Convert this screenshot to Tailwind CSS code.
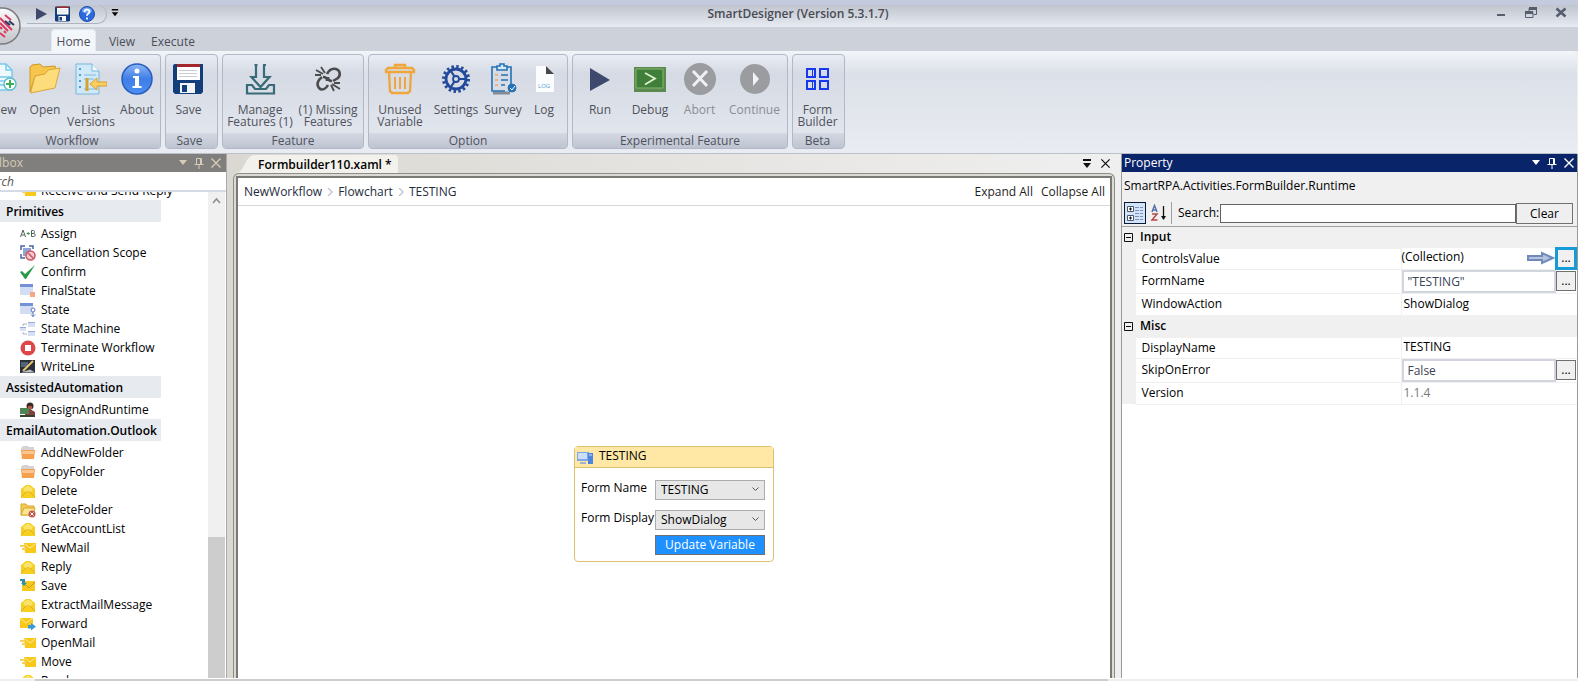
<!DOCTYPE html>
<html lang="en">
<head>
    <meta charset="UTF-8">
    <meta name="viewport" content="width=device-width, initial-scale=1.0">
    <title>SmartDesigner (Version 5.3.1.7)</title>
    <script src="https://cdn.jsdelivr.net/npm/@tailwindcss/browser@4"></script>
</head>
<body class="h-screen flex flex-col overflow-hidden bg-[#efefef] font-['Open_Sans','Noto_Sans',sans-serif] text-xs text-black">

    <!-- Shared icons -->
    <svg class="hidden" aria-hidden="true">
        <symbol id="floppy" viewBox="0 0 32 32">
            <path d="M0 3a2 2 0 0 1 2-2h28v28l-2 2H2l-2-2z" fill="#123f7c"/>
            <path d="M4 1h23v3H4z" fill="#a3262a"/>
            <path d="M4 4h23v13H4z" fill="#fff"/>
            <path d="M6 7.500h18M6 10.500h18M6 13.500h18" stroke="#c9ccd2"/>
            <path d="M7 20h15v10H7z" fill="#f2f4f7"/>
            <path d="M9 22h5v7H9z" fill="#123f7c"/>
        </symbol>
        <symbol id="folder" viewBox="0 0 16 16">
            <path d="M1 3l2-2h5l1 1h5v4H1z" fill="#d5d3d6"/>
            <path d="M1 5h14l-1 9H2z" fill="#f5a04e"/>
            <path d="M2 6h12l-.5 3h-11z" fill="#fcc792"/>
        </symbol>
        <symbol id="mail-open" viewBox="0 0 16 16">
            <path d="M1 6l5-4h4l5 4v9H1z" fill="#f7cf20"/>
            <path d="M3 6l4-3h2l4 3-3 4H6z" fill="#fae369"/>
            <path d="M1 14l5-5h4l5 5" fill="none" stroke="#e3ae12"/>
        </symbol>
        <symbol id="mail-fast" viewBox="0 0 16 16">
            <path d="M4 3h12v10H5z" fill="#f8c81b"/>
            <path d="M0 6h5M2 9h4" stroke="#f5cf62" stroke-width="2"/>
            <path d="M5 4l5 4 5-4" fill="none" stroke="#fdeb9d"/>
        </symbol>
        <symbol id="pin" viewBox="0 0 12 12">
            <path d="M3.500 7V1.500h5V7M1.500 7.500h9M6 8v4M7.500 1.500V7" fill="none" stroke="currentColor"/>
        </symbol>
        <symbol id="cross" viewBox="0 0 12 12">
            <path d="M1.500 1.500l9 9M10.500 1.500l-9 9" fill="none" stroke="currentColor" stroke-width="1.400"/>
        </symbol>
        <symbol id="caret" viewBox="0 0 10 6">
            <path d="M1 0h8L5 5z" fill="currentColor"/>
        </symbol>
        <symbol id="menu-caret" viewBox="0 0 10 10">
            <path d="M1 0h8v2H1zM1 4h8L5 9z" fill="currentColor"/>
        </symbol>
        <symbol id="minus-box" viewBox="0 0 9 9">
            <path d="M.5.5h8v8h-8zM2 4.500h5" fill="none" stroke="#111"/>
        </symbol>
    </svg>

    <!-- Title bar -->
    <header class="relative h-[27px] shrink-0 flex items-start pt-[2px] border-t-[5px] border-[#c4cbdf] bg-linear-to-b from-[#c0c4cd] to-[#e7ebf2]">
        <div class="-mt-[2px] ml-[27px] w-[80px] h-[19px] flex items-center gap-2 pl-[9px] rounded-r-full rounded-bl-md border-r border-b border-[#aeb3bf]">
            <button aria-label="Run"><svg class="w-[11px] h-3" viewBox="0 0 11 12"><path d="M0 0l11 6-11 6z" fill="#3d4a6e"/></svg></button>
            <button aria-label="Save"><svg class="size-4"><use href="#floppy"/></svg></button>
            <button aria-label="Help"><svg class="size-4" viewBox="0 0 16 16"><circle cx="8" cy="8" r="7.500" fill="#2d6bdc" stroke="#1d4fae"/><ellipse cx="8" cy="4.500" rx="5" ry="3" fill="#6ea4f5"/><path d="M5.500 6c0-3.500 5-3 5-.3C10.500 7.800 8 7.500 8 9.800M8 11.500v2" fill="none" stroke="#fff" stroke-width="1.800"/></svg></button>
        </div>
        <button class="ml-1 mt-[2px]" aria-label="Customize toolbar"><svg class="w-2 h-2" viewBox="0 0 10 10"><use href="#menu-caret"/></svg></button>
        <h1 class="absolute inset-x-0 -top-1 text-center leading-[26px] pl-[18px] font-semibold text-[#484b55] pointer-events-none">SmartDesigner (Version 5.3.1.7)</h1>
        <div class="ml-auto mr-[11px] flex items-center gap-[18px] text-[#565d6c]">
            <button aria-label="Minimize"><svg class="size-3" viewBox="0 0 12 12"><path d="M2 7h8v2H2z" fill="currentColor"/></svg></button>
            <button aria-label="Restore"><svg class="size-3" viewBox="0 0 12 12"><path d="M4 4V1.500h7.500v6H9" fill="none" stroke="currentColor"/><path d="M4 0h8v3H4zM0 4h8v3H0z" fill="currentColor"/><path d="M.5 5.500h7.500v5H.5z" fill="none" stroke="currentColor"/></svg></button>
            <button aria-label="Close"><svg class="size-3" viewBox="0 0 12 12"><path d="M1.500 1.500l9 8M10.500 1.500l-9 8" stroke="currentColor" stroke-width="2.600"/></svg></button>
        </div>
        <svg class="absolute left-0 -top-1 z-10 w-[22px] h-[44px]" viewBox="0 0 22 44">
            <defs><linearGradient id="orb" x2="0" y2="1"><stop stop-color="#fafafb"/><stop offset="1" stop-color="#c2c3c7"/></linearGradient></defs>
            <circle cx="2" cy="25" r="18" fill="url(#orb)" stroke="#777a82" stroke-width="1.500"/>
            <path d="M0 17l12 12M0 22l8 8M5 14l6 5M0 26l2 2M0 32l5 4M4 30l2 2" stroke="#dc3a60" stroke-width="2"/>
            <path d="M5 20l5 4M9 20l5 4" stroke="#2c3a62" stroke-width="2"/>
        </svg>
    </header>

    <!-- Ribbon tabs -->
    <nav class="h-6 shrink-0 flex items-end bg-[#cdd1da] pl-[51px] text-[#4b4e58]">
        <a href="#" class="w-[45px] h-[22px] leading-6 text-center rounded-t border border-b-0 border-[#e3e7ee] bg-[#f3f6fb]">Home</a>
        <a href="#" class="w-[52px] h-[22px] leading-[26px] text-center">View</a>
        <a href="#" class="w-[50px] h-[22px] leading-[26px] text-center">Execute</a>
    </nav>

    <!-- Ribbon -->
    <section class="h-[103px] shrink-0 flex gap-1 py-[3px] pb-1 mr-px border-b border-[#bcc0c8] rounded-tr-md bg-linear-to-b from-[#f2f5fa] via-[#dce0e8] via-22% to-[#e9ecf2] text-[#4f525c] leading-3 whitespace-nowrap">
        <div class="w-[161px] flex flex-col overflow-hidden rounded-r-sm border border-l-0 border-[#b2b8c6] bg-linear-to-b from-[#e9edf4] via-[#d5dae4] via-20% to-[#e5e8ef]">
            <div class="flex-1 flex justify-end">
                <button class="w-9 shrink-0 flex flex-col items-center pt-2 gap-[9px]">
                    <svg class="size-8" viewBox="0 0 32 32"><path d="M4 1h14l6 6v20H4z" fill="#eef9fe" stroke="#77c9ec" stroke-width="1.500"/><path d="M18 1v6h6M8 14h15M8 18h10M8 22h8" fill="none" stroke="#77c9ec" stroke-width="1.500"/><circle cx="22" cy="21" r="6" fill="#fff" stroke="#5cc0ca" stroke-width="1.500"/><path d="M22 17v8M18 21h8" stroke="#3fae58" stroke-width="2"/></svg>
                    <span>New</span>
                </button>
                <button class="w-[46px] shrink-0 flex flex-col items-center pt-2 gap-[9px]">
                    <svg class="size-8" viewBox="0 0 32 32"><path d="M1 29V4l2-2 8-1 3 3 12-1 1 3v4l-21 3z" fill="#f6c54b" stroke="#d09a25"/><path d="M1.500 30L6 13l10-2 3-4 12-2-5 20z" fill="#fddc7c" stroke="#dba73a"/></svg>
                    <span>Open</span>
                </button>
                <button class="w-[46px] shrink-0 flex flex-col items-center pt-2 gap-[9px]">
                    <svg class="size-8" viewBox="0 0 32 32"><path d="M1 1h16l7 7v23H1z" fill="#cfe9f8" stroke="#79b7da"/><path d="M17 1v7h7" fill="#f1fafe" stroke="#79b7da"/><path d="M4 6h2M4 12h2M4 18h2M4 24h2" stroke="#4e9ed0" stroke-width="2"/><path d="M9 12h12M9 16h10M9 26h12" stroke="#82b9da"/><path d="M12 15v13" stroke="#d7a22b" stroke-width="3"/><path d="M15 21l7-6v4h10v4H22v4z" fill="#f9ce5d" stroke="#d8a032"/></svg>
                    <span>List<br>Versions</span>
                </button>
                <button class="w-[46px] shrink-0 flex flex-col items-center pt-2 gap-[9px]">
                    <svg class="size-8" viewBox="0 0 32 32"><defs><linearGradient id="info" x2="0" y2="1"><stop stop-color="#8ab6f5"/><stop offset=".5" stop-color="#3f7ee6"/><stop offset="1" stop-color="#4b90f2"/></linearGradient></defs><circle cx="16" cy="16" r="15" fill="url(#info)" stroke="#2a5cbd" stroke-width="1.500"/><circle cx="16" cy="8" r="2.500" fill="#fff"/><path d="M12 13h6v10h2.500v2h-9v-2H14v-8h-2z" fill="#fff"/></svg>
                    <span>About</span>
                </button>
            </div>
            <div class="h-[15px] leading-[15px] text-center pr-4 bg-linear-to-b from-[#d5d9e4] to-[#bdc3d0]">Workflow</div>
        </div>

        <div class="w-[53px] flex flex-col rounded-sm border border-[#b2b8c6] bg-linear-to-b from-[#e9edf4] via-[#d5dae4] via-20% to-[#e5e8ef]">
            <div class="flex-1 flex">
                <button class="w-[45px] flex flex-col items-center pt-2 gap-[9px]">
                    <svg class="size-8"><use href="#floppy"/></svg>
                    <span>Save</span>
                </button>
            </div>
            <div class="h-[15px] leading-[15px] text-center pr-1 bg-linear-to-b from-[#d5d9e4] to-[#bdc3d0]">Save</div>
        </div>

        <div class="w-[142px] flex flex-col rounded-sm border border-[#b2b8c6] bg-linear-to-b from-[#e9edf4] via-[#d5dae4] via-20% to-[#e5e8ef]">
            <div class="flex-1 flex">
                <button class="w-[74px] shrink-0 flex flex-col items-center pt-2 gap-[9px]">
                    <svg class="size-8" viewBox="0 0 32 32" fill="none" stroke="#386b77" stroke-width="2.200"><path d="M10.500 2h3M19 2h3M12 2v12H7.500l9 10 9-10H20V2"/><path d="M3 22h5l3 4h11l3-4h5v8.500H3z"/></svg>
                    <span>Manage<br>Features (1)</span>
                </button>
                <button class="w-[62px] shrink-0 flex flex-col items-center pt-2 gap-[9px]">
                    <svg class="size-8" viewBox="0 0 32 32" fill="none" stroke="#4b4b4d"><path d="M15 11c2-4 5-6 9-5 4 1 5 6 2 9l-5 3M20 18c-3 0-4-2-4-4M10 14c-4 3-6 7-3 11 3 3 7 1 9-3M11 14c3 0 4 1 4 4" stroke-width="2.600"/><path d="M4 7l7 4M9 4l4 6M3 12l6 0M20 21l8 5M19 22l3 6M22 20h6" stroke-width="1.800"/></svg>
                    <span>(1) Missing<br>Features</span>
                </button>
            </div>
            <div class="h-[15px] leading-[15px] text-center bg-linear-to-b from-[#d5d9e4] to-[#bdc3d0]">Feature</div>
        </div>

        <div class="w-[200px] flex flex-col rounded-sm border border-[#b2b8c6] bg-linear-to-b from-[#e9edf4] via-[#d5dae4] via-20% to-[#e5e8ef]">
            <div class="flex-1 flex">
                <button class="w-[62px] shrink-0 flex flex-col items-center pt-2 gap-[9px]">
                    <svg class="size-8" viewBox="0 0 32 32" fill="none" stroke="#efa63c" stroke-width="2.400"><path d="M2 9V7l2-2h24l2 2v2zM11 5V2h10v3M5 9l1 19 2 2h16l2-2 1-19"/><path d="M11 14v12M16 14v12M21 14v12" stroke-width="2"/></svg>
                    <span>Unused<br>Variable</span>
                </button>
                <button class="w-[50px] shrink-0 flex flex-col items-center pt-2 gap-[9px]">
                    <svg class="size-8" viewBox="0 0 32 32" fill="none" stroke="#23499a"><circle cx="16" cy="16" r="12.500" stroke-width="3" stroke-dasharray="2.450 2.450"/><circle cx="16" cy="16" r="10" stroke-width="2.800"/><circle cx="16" cy="16" r="3" stroke-width="1.800"/><path d="M19 16h6M14.500 13.500l-4-6M14.500 18.500l-4 6" stroke-width="2.200"/></svg>
                    <span>Settings</span>
                </button>
                <button class="w-[44px] shrink-0 flex flex-col items-center pt-2 gap-[9px]">
                    <svg class="size-8" viewBox="0 0 32 32" fill="none" stroke="#2472b4"><path d="M6 30h17" stroke="#858b94" stroke-width="3"/><path d="M10 4H5v24h13M20 4h4v17" stroke-width="1.600"/><path d="M10 3h3V1h4v2h3v4H10z" stroke-width="1.600" fill="#d5e8f6"/><path d="M14 12h7M14 17h7M14 22h4" stroke-width="1.600"/><path d="M8 12h3M8 17h3M8 22h3" stroke="#e9b186" stroke-width="2"/><circle cx="25" cy="25" r="4" fill="#2472b4"/><path d="M23 25l2 2 3-4" stroke="#fff"/></svg>
                    <span>Survey</span>
                </button>
                <button class="w-[38px] shrink-0 flex flex-col items-center pt-2 gap-[9px]">
                    <svg class="size-8" viewBox="0 0 32 32"><path d="M8 3h10l8 8v18H8z" fill="#fbfcfd"/><path d="M18 3l8 8h-8z" fill="#47484c"/><text x="10" y="25" font-size="6" fill="#5aa2d2">LOG</text></svg>
                    <span>Log</span>
                </button>
            </div>
            <div class="h-[15px] leading-[15px] text-center bg-linear-to-b from-[#d5d9e4] to-[#bdc3d0]">Option</div>
        </div>

        <div class="w-[216px] flex flex-col rounded-sm border border-[#b2b8c6] bg-linear-to-b from-[#e9edf4] via-[#d5dae4] via-20% to-[#e5e8ef]">
            <div class="flex-1 flex">
                <button class="w-[54px] shrink-0 flex flex-col items-center pt-2 gap-[9px]">
                    <svg class="size-8" viewBox="0 0 32 32"><path d="M6 5l20 12L6 28z" fill="#3d4a6e"/></svg>
                    <span>Run</span>
                </button>
                <button class="w-[46px] shrink-0 flex flex-col items-center pt-2 gap-[9px]">
                    <svg class="size-8" viewBox="0 0 32 32"><path d="M0 4h32v25H0z" fill="#5a8a4e"/><path d="M2 6h27v19H2z" fill="#3f7f39" stroke="#86b56e"/><path d="M11 10l10 5.500-10 6" fill="none" stroke="#e0f0cf" stroke-width="1.800"/></svg>
                    <span>Debug</span>
                </button>
                <button class="w-[53px] shrink-0 flex flex-col items-center pt-2 gap-[9px] text-[#8b8e96]">
                    <svg class="size-8" viewBox="0 0 32 32"><circle cx="16" cy="16" r="16" fill="#9a9c9f"/><path d="M9 8l14 15M23 8L9 23" stroke="#eef0f3" stroke-width="3"/></svg>
                    <span>Abort</span>
                </button>
                <button class="w-[57px] shrink-0 flex flex-col items-center pt-2 gap-[9px] text-[#8b8e96]">
                    <svg class="size-8" viewBox="0 0 32 32"><circle cx="16" cy="16" r="15" fill="#9a9c9f"/><path d="M14 9l6 7-6 7z" fill="#f2f3f5"/></svg>
                    <span>Continue</span>
                </button>
            </div>
            <div class="h-[15px] leading-[15px] text-center bg-linear-to-b from-[#d5d9e4] to-[#bdc3d0]">Experimental Feature</div>
        </div>

        <div class="w-[53px] flex flex-col rounded-sm border border-[#b2b8c6] bg-linear-to-b from-[#e9edf4] via-[#d5dae4] via-20% to-[#e5e8ef]">
            <div class="flex-1 flex">
                <button class="w-[49px] flex flex-col items-center pt-2 gap-[9px]">
                    <svg class="size-8" viewBox="0 0 32 32" fill="none" stroke="#1838f0" stroke-width="2"><path d="M5 6h8v8H5zM18 6h8v8h-8zM5 18h8v8H5zM18 18h8v8h-8z"/><path d="M10.500 6v8M10.500 18v8" stroke-width="1"/></svg>
                    <span>Form<br>Builder</span>
                </button>
            </div>
            <div class="h-[15px] leading-[15px] text-center pr-[2px] bg-linear-to-b from-[#d5d9e4] to-[#bdc3d0]">Beta</div>
        </div>
    </section>

    <main class="flex-1 min-h-0 flex bg-linear-to-r from-[#d5d2ca] to-[#efefef] to-70%">

        <!-- Toolbox -->
        <aside class="w-[227px] shrink-0 flex flex-col bg-white border-r border-[#a9a9a9]">
            <div class="h-[18px] shrink-0 flex items-center overflow-hidden bg-[#807f7e] text-[#d5cdb5]">
                <h2 class="-ml-[22px] mr-auto leading-5">Toolbox</h2>
                <div class="flex items-center gap-[5px] pr-1">
                    <button aria-label="Toolbox menu"><svg class="w-[10px] h-[6px]"><use href="#caret"/></svg></button>
                    <button aria-label="Pin toolbox"><svg class="size-3"><use href="#pin"/></svg></button>
                    <button aria-label="Close toolbox"><svg class="size-3"><use href="#cross"/></svg></button>
                </div>
            </div>
            <input type="text" aria-label="Search toolbox" placeholder="Search" class="h-5 shrink-0 w-full -indent-[22px] italic border-b-2 border-[#d3dbe6] placeholder:text-[#555]">
            <div class="flex-1 min-h-0 flex">
                <div class="flex-1 overflow-hidden leading-[19px] whitespace-nowrap">
                    <ul class="-mt-[11px]">
                        <li class="flex items-center gap-[5px] pl-5"><svg class="size-4"><use href="#mail-fast"/></svg>Receive and Send Reply</li>
                    </ul>
                    <h3 class="w-[161px] h-[22px] leading-6 pl-[6px] mb-[2px] font-semibold bg-[#e7ebf0]">Primitives</h3>
                    <ul>
                        <li class="flex items-center gap-[5px] pl-5">
                            <svg class="size-4" viewBox="0 0 16 16" fill="none" stroke="#55605a"><path d="M.5 11L3 4l2.500 7M1.500 9h3M11.500 4.500v6h2.200c2 0 2-3 0-3h-2.200M13 7.500c2-.2 2-3 0-3h-1.500"/><path d="M6.500 7.500h3.500M8.200 6v3" stroke="#3f9a50"/></svg>Assign
                        </li>
                        <li class="flex items-center gap-[5px] pl-5">
                            <svg class="size-4" viewBox="0 0 16 16"><path d="M1 5V1h4M9 1h4v3M1 9v4h4" fill="none" stroke="#4c62a0" stroke-width="1.500"/><path d="M3 3h8v8H3z" fill="#8fa5d6"/><circle cx="10.500" cy="10.500" r="4.500" fill="#f2c9d1" stroke="#cc5565" stroke-width="1.500"/><path d="M7.500 7.500l6 6" stroke="#cc5565" stroke-width="1.500"/></svg>Cancellation Scope
                        </li>
                        <li class="flex items-center gap-[5px] pl-5">
                            <svg class="size-4" viewBox="0 0 16 16"><path d="M0 8l2-1 3 3 10-9L6 15H5z" fill="#2b9a48"/></svg>Confirm
                        </li>
                        <li class="flex items-center gap-[5px] pl-5">
                            <svg class="size-4" viewBox="0 0 16 16"><path d="M0 1h13v11H0z" fill="#d3def4"/><path d="M0 1h13v3H0z" fill="#7391d3"/><path d="M10 9h5v5h-5z" fill="#f5a77d"/></svg>FinalState
                        </li>
                        <li class="flex items-center gap-[5px] pl-5">
                            <svg class="size-4" viewBox="0 0 16 16"><path d="M0 1h13v11H0z" fill="#d3def4"/><path d="M0 1h13v3H0z" fill="#7391d3"/><circle cx="13" cy="8" r="2" fill="#fff" stroke="#5c76b8"/><path d="M13 10v5M11 12.500l2 2 2-2" fill="none" stroke="#5c76b8"/></svg>State
                        </li>
                        <li class="flex items-center gap-[5px] pl-5">
                            <svg class="size-4" viewBox="0 0 16 16"><path d="M8 1h7v5H8zM8 10h7v5H8zM0 6h6v4H0z" fill="#d7e0f3"/><path d="M8 1h7v1H8zM8 10h7v1H8zM0 6h6v1H0z" fill="#94aad8"/><path d="M3 5V3h4M3 11v2h4" fill="none" stroke="#a5b3d0"/></svg>State Machine
                        </li>
                        <li class="flex items-center gap-[5px] pl-5">
                            <svg class="size-4" viewBox="0 0 16 16"><circle cx="8" cy="8" r="7.500" fill="#dd4747"/><path d="M5 5h6v6H5z" fill="#fff"/></svg>Terminate Workflow
                        </li>
                        <li class="flex items-center gap-[5px] pl-5">
                            <svg class="size-4" viewBox="0 0 16 16"><path d="M0 1h15v13H0z" fill="#2a3038"/><path d="M1 3h7v5H1z" fill="#51627a"/><path d="M3 12L13 2" stroke="#e7c36b" stroke-width="2"/><path d="M1 13.500l9-3 5 3z" fill="#b8bec6"/></svg>WriteLine
                        </li>
                    </ul>
                    <h3 class="w-[161px] h-[22px] leading-6 pl-[6px] mb-[2px] font-semibold bg-[#e7ebf0]">AssistedAutomation</h3>
                    <ul>
                        <li class="flex items-center gap-[5px] pl-5">
                            <svg class="size-4" viewBox="0 0 16 16"><circle cx="10" cy="4" r="3.500" fill="#3a2b28"/><path d="M8 4h4v3H8z" fill="#b5573e"/><path d="M5 15V9l5-2 5 3v5z" fill="#84403a"/><path d="M0 6h9v6H0z" fill="#4d8355"/><path d="M0 13h15v2H0z" fill="#32452e"/></svg>DesignAndRuntime
                        </li>
                    </ul>
                    <h3 class="w-[161px] h-[22px] leading-6 pl-[6px] mb-[2px] font-semibold bg-[#e7ebf0]">EmailAutomation.Outlook</h3>
                    <ul>
                        <li class="flex items-center gap-[5px] pl-5"><svg class="size-4"><use href="#folder"/></svg>AddNewFolder</li>
                        <li class="flex items-center gap-[5px] pl-5"><svg class="size-4"><use href="#folder"/></svg>CopyFolder</li>
                        <li class="flex items-center gap-[5px] pl-5"><svg class="size-4"><use href="#mail-open"/></svg>Delete</li>
                        <li class="flex items-center gap-[5px] pl-5">
                            <svg class="size-4" viewBox="0 0 16 16"><path d="M1 13V2h5l1 2h7v9z" fill="#f3cb50" stroke="#d9a92c"/><path d="M1 13l3-7h11l-2 7z" fill="#fbe594" stroke="#d9a92c"/><circle cx="12" cy="12" r="3.500" fill="#c2574a"/><path d="M10.500 10.500l3 3M13.500 10.500l-3 3" stroke="#fff"/></svg>DeleteFolder
                        </li>
                        <li class="flex items-center gap-[5px] pl-5"><svg class="size-4"><use href="#mail-open"/></svg>GetAccountList</li>
                        <li class="flex items-center gap-[5px] pl-5"><svg class="size-4"><use href="#mail-fast"/></svg>NewMail</li>
                        <li class="flex items-center gap-[5px] pl-5"><svg class="size-4"><use href="#mail-open"/></svg>Reply</li>
                        <li class="flex items-center gap-[5px] pl-5">
                            <svg class="size-4" viewBox="0 0 16 16"><path d="M2 3h13v10H2z" fill="#f8c81b"/><path d="M6 7l3 3 6-6" fill="none" stroke="#c99a18"/><path d="M0 1h5v4h2L4 8 1 5h1V3H0z" fill="#2f8fae"/></svg>Save
                        </li>
                        <li class="flex items-center gap-[5px] pl-5"><svg class="size-4"><use href="#mail-open"/></svg>ExtractMailMessage</li>
                        <li class="flex items-center gap-[5px] pl-5">
                            <svg class="size-4" viewBox="0 0 16 16"><path d="M0 2h13v10H0z" fill="#f8c81b"/><path d="M0 2l6 5 7-5" fill="none" stroke="#fdeb9d"/><path d="M8 9h3V7l5 3.500-5 4v-2H8z" fill="#3b9ad6"/></svg>Forward
                        </li>
                        <li class="flex items-center gap-[5px] pl-5"><svg class="size-4"><use href="#mail-fast"/></svg>OpenMail</li>
                        <li class="flex items-center gap-[5px] pl-5"><svg class="size-4"><use href="#mail-fast"/></svg>Move</li>
                        <li class="flex items-center gap-[5px] pl-5"><svg class="size-4"><use href="#mail-open"/></svg>Read</li>
                    </ul>
                </div>
                <div class="w-[18px] shrink-0 flex flex-col bg-[#f0f0f0] border-r border-white">
                    <svg class="w-[17px] h-[17px]" viewBox="0 0 17 17"><path d="M5 11l3.500-4 3.500 4" fill="none" stroke="#8c8c8c" stroke-width="1.500"/></svg>
                    <div class="mt-auto h-[29%] bg-[#cdcdcd]"></div>
                </div>
            </div>
        </aside>

        <!-- Designer -->
        <section class="flex-1 min-w-0 flex flex-col pl-[6px] pr-[6px]">
            <div class="h-[19px] shrink-0 flex items-end">
                <div class="flex h-[18px]">
                    <svg class="w-[18px] h-[18px] ml-1" viewBox="0 0 18 18"><path d="M0 18C8 16 8 0 18 0v18z" fill="#f3f1ec"/></svg>
                    <h2 class="pr-[6px] font-semibold leading-[20px] bg-[#f3f1ec] rounded-tr-sm -ml-px pl-1">Formbuilder110.xaml *</h2>
                </div>
                <div class="ml-auto self-center flex items-center gap-2 pr-1 text-[#111]">
                    <button aria-label="Open documents"><svg class="size-[10px]"><use href="#menu-caret"/></svg></button>
                    <button aria-label="Close document"><svg class="size-[11px]"><use href="#cross"/></svg></button>
                </div>
            </div>
            <div class="flex-1 min-h-0 flex flex-col border border-b-0 border-[#8f8d88] rounded-t-md px-[2px] pt-[2px] bg-[#dcdad4]">
                <div class="flex-1 flex flex-col border-2 border-b-0 border-[#7b7974] bg-white">
                    <div class="h-7 shrink-0 flex items-center border-b border-[#d3d6da] pl-[6px] pr-[5px] text-[#1f2b3c]">
                        <a href="#">NewWorkflow</a>
                        <svg class="w-4 h-2" viewBox="0 0 16 8"><path d="M6 0l4 4-4 4" fill="none" stroke="#c3c9d3" stroke-width="1.500"/></svg>
                        <a href="#">Flowchart</a>
                        <svg class="w-4 h-2" viewBox="0 0 16 8"><path d="M6 0l4 4-4 4" fill="none" stroke="#c3c9d3" stroke-width="1.500"/></svg>
                        <a href="#">TESTING</a>
                        <div class="ml-auto flex gap-2 text-[#1e1e1e]">
                            <button>Expand All</button>
                            <button>Collapse All</button>
                        </div>
                    </div>
                    <div class="relative flex-1">
                        <!-- Activity node -->
                        <div class="absolute left-[336px] top-[240px] w-[200px] h-[116px] rounded-sm border border-[#dcc06e] bg-white">
                            <div class="h-[21px] flex items-center gap-[6px] pl-[2px] border-b border-[#dcc06e] bg-[#ffe8a6]">
                                <svg class="size-4 mt-[2px]" viewBox="0 0 16 16"><path d="M0 2h12v9H0z" fill="#7ea6e8"/><path d="M1 3h9v6H1z" fill="#c9dffa"/><path d="M3 12h6v2H3z" fill="#9fb2d4"/><path d="M11 3h5v11h-5z" fill="#4f86dd"/><path d="M12 5h3" stroke="#cfe0fa"/></svg>
                                <span class="leading-4 pb-[2px]">TESTING</span>
                            </div>
                            <div class="grid grid-cols-[74px_110px] pl-[6px] pt-3">
                                <label for="formName" class="h-[30px] leading-4">Form Name</label>
                                <div class="relative h-[30px]">
                                    <select id="formName" class="appearance-none w-full h-5 pl-[5px] bg-[#e7e7e7] border border-[#acacac]"><option>TESTING</option></select>
                                    <svg class="absolute right-[6px] top-[7px] w-[7px] h-[5px] pointer-events-none" viewBox="0 0 7 5"><path d="M.5.5l3 3 3-3" fill="none" stroke="#555"/></svg>
                                </div>
                                <label for="formDisplay" class="leading-4 whitespace-nowrap">Form Display</label>
                                <div class="relative h-[25px]">
                                    <select id="formDisplay" class="appearance-none w-full h-5 pl-[5px] bg-[#e7e7e7] border border-[#acacac]"><option>ShowDialog</option></select>
                                    <svg class="absolute right-[6px] top-[7px] w-[7px] h-[5px] pointer-events-none" viewBox="0 0 7 5"><path d="M.5.5l3 3 3-3" fill="none" stroke="#555"/></svg>
                                </div>
                                <button class="col-start-2 h-5 leading-[18px] text-white bg-[#1e90ff] border border-[#707070]">Update Variable</button>
                            </div>
                        </div>
                    </div>
                </div>
            </div>
        </section>

        <!-- Property grid -->
        <aside class="w-[457px] shrink-0 flex flex-col bg-white border-x border-[#9a9a9a]">
            <div class="h-[18px] shrink-0 flex items-center justify-between pl-[2px] pr-[2px] bg-[#0a246a] text-white">
                <h2 class="leading-5">Property</h2>
                <div class="flex items-center gap-[5px]">
                    <button aria-label="Property menu"><svg class="w-[10px] h-[6px]"><use href="#caret"/></svg></button>
                    <button aria-label="Pin property"><svg class="size-3"><use href="#pin"/></svg></button>
                    <button aria-label="Close property"><svg class="size-3"><use href="#cross"/></svg></button>
                </div>
            </div>
            <div class="bg-[#f0f0f0] border-b border-[#a0a0a0]">
                <p class="pl-[2px] leading-7">SmartRPA.Activities.FormBuilder.Runtime</p>
                <div class="flex items-center pl-[2px] pr-1 pb-[2px] pt-[2px]">
                    <button aria-label="Categorized" class="size-[22px] grid place-items-center bg-[#d3e3f8] border border-[#0b1a38]">
                        <svg class="size-[18px]" viewBox="0 0 18 18"><path d="M1.500 2.500h6v5h-6zM1.500 11.500h6v5h-6z" fill="#fff" stroke="#4a5670"/><path d="M3 5h3M4.500 3.500v3M3 14h3M4.500 12.500v3" stroke="#111"/><path d="M9 3.500h4M9 6.500h4M14 3.500h3M14 6.500h3M9 9.500h4M14 9.500h3M9 12.500h4M14 12.500h3M9 15.500h4M14 15.500h3" stroke="#7b92bd"/></svg>
                    </button>
                    <button aria-label="Alphabetical" class="w-[25px] h-[22px] grid place-items-center">
                        <svg class="size-[18px]" viewBox="0 0 18 18" fill="none"><path d="M2 8l2.500-6.500L7 8M3 6h3" stroke="#5672ac" stroke-width="1.500"/><path d="M2 10h5l-5 6h5.500" stroke="#b4474a" stroke-width="1.500"/><path d="M13.500 2v13" stroke="#111" stroke-width="1.300"/><path d="M11 12h5l-2.500 4z" fill="#111"/></svg>
                    </button>
                    <label for="propertySearch" class="border-l border-[#a0a0a0] pl-[6px] leading-[22px] w-[49px] whitespace-nowrap">Search:</label>
                    <input id="propertySearch" type="text" class="flex-1 min-w-0 h-[19px] bg-white border border-[#626262]">
                    <button class="w-[57px] h-[21px] leading-[19px] bg-[#efefef] border border-[#707070]">Clear</button>
                </div>
            </div>
            <table class="w-full table-fixed border-collapse bg-white">
                <colgroup><col class="w-[13px]"><col><col class="w-[176px]"></colgroup>
                <tbody>
                    <tr class="h-[21px] bg-[#f0f0f0]">
                        <td><button class="block ml-[2px]" aria-label="Collapse Input"><svg class="size-[9px]"><use href="#minus-box"/></svg></button></td>
                        <th colspan="2" class="pl-[5px] text-left font-semibold">Input</th>
                    </tr>
                    <tr class="h-[21px]">
                        <td class="bg-[#f0f0f0]"></td>
                        <td class="pl-[6px] border border-[#f0f0f0]">ControlsValue</td>
                        <td class="border-b border-[#f0f0f0]">
                            <div class="h-5 flex items-center"><span class="pb-[3px]">(Collection)</span>
                                <svg class="ml-auto w-[28px] h-[14px]" viewBox="0 0 28 14"><path d="M1 5h14V2l11 5-11 5V9H1z" fill="#b4c4df" stroke="#6f8abb" stroke-width="2"/></svg>
                                <button class="relative z-10 w-[22px] h-[23px] -my-1 leading-4 bg-[#f0f0f0] border-[3px] border-[#179bd7]" aria-label="Edit ControlsValue">...</button>
                            </div>
                        </td>
                    </tr>
                    <tr class="h-[24px]">
                        <td class="bg-[#f0f0f0]"></td>
                        <td class="pl-[6px] border border-[#f0f0f0]"><label for="formNameValue">FormName</label></td>
                        <td class="border-b border-[#f0f0f0]">
                            <div class="flex items-center pr-px">
                                <input id="formNameValue" type="text" value="&quot;TESTING&quot;" class="flex-1 min-w-0 h-[23px] pl-1 text-[#3a4354] border-2 border-[#d0d5de]">
                                <button class="w-5 h-5 leading-4 bg-[#f0f0f0] border border-[#707070]" aria-label="Edit FormName">...</button>
                            </div>
                        </td>
                    </tr>
                    <tr class="h-[22px]">
                        <td class="bg-[#f0f0f0]"></td>
                        <td class="pl-[6px] border border-[#f0f0f0]">WindowAction</td>
                        <td class="pl-[2px] border-b border-[#f0f0f0]">ShowDialog</td>
                    </tr>
                    <tr class="h-[22px] bg-[#f0f0f0]">
                        <td><button class="block ml-[2px]" aria-label="Collapse Misc"><svg class="size-[9px]"><use href="#minus-box"/></svg></button></td>
                        <th colspan="2" class="pl-[5px] text-left font-semibold">Misc</th>
                    </tr>
                    <tr class="h-[21px]">
                        <td class="bg-[#f0f0f0]"></td>
                        <td class="pl-[6px] border border-[#f0f0f0]">DisplayName</td>
                        <td class="pl-[2px] border-b border-[#f0f0f0]">TESTING</td>
                    </tr>
                    <tr class="h-[24px]">
                        <td class="bg-[#f0f0f0]"></td>
                        <td class="pl-[6px] border border-[#f0f0f0]"><label for="skipOnError">SkipOnError</label></td>
                        <td class="border-b border-[#f0f0f0]">
                            <div class="flex items-center pr-px">
                                <input id="skipOnError" type="text" value="False" class="flex-1 min-w-0 h-[23px] pl-1 text-[#3a4354] border-2 border-[#d0d5de]">
                                <button class="w-5 h-5 leading-4 bg-[#f0f0f0] border border-[#707070]" aria-label="Edit SkipOnError">...</button>
                            </div>
                        </td>
                    </tr>
                    <tr class="h-[22px]">
                        <td class="bg-[#f0f0f0]"></td>
                        <td class="pl-[6px] border border-[#f0f0f0]">Version</td>
                        <td class="pl-[2px] border-b border-[#f0f0f0] text-[#7a7a7a]">1.1.4</td>
                    </tr>
                </tbody>
            </table>
        </aside>
    </main>

    <!-- Horizontal scrollbar -->
    <div class="h-[3px] shrink-0 flex border-t border-white bg-[#efefef]">
        <div class="ml-[35px] w-[68%] bg-[#cdcdcd]"></div>
    </div>
</body>
</html>
